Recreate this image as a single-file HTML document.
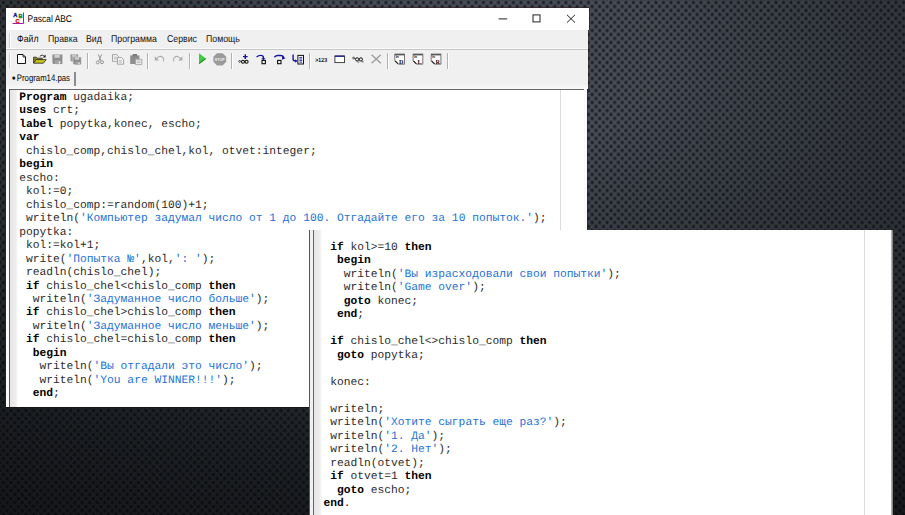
<!DOCTYPE html>
<html lang="ru">
<head>
<meta charset="utf-8">
<title>Pascal ABC</title>
<style>
html,body{margin:0;padding:0;}
body{width:905px;height:515px;overflow:hidden;position:relative;background:#16171a;font-family:"Liberation Sans",sans-serif;}
#bg{position:absolute;left:0;top:0;width:905px;height:515px;
  background:
   radial-gradient(circle at 3.75px 4px, rgba(2,4,10,.64) 0, rgba(2,4,10,.64) 0.9px, rgba(2,4,12,0) 2.3px) -0.3px -1.5px/7.5px 8px,
   radial-gradient(circle at 3.75px 4px, rgba(2,4,10,.64) 0, rgba(2,4,10,.64) 0.9px, rgba(2,4,12,0) 2.3px) 3.45px 2.5px/7.5px 8px,
   radial-gradient(ellipse 1000px 550px at 480px 60px, #484c55 0%, #474b54 18%, #41464f 23%, #393d44 33.5%, #33373c 42.5%, #2f3338 49%, #26292d 61%, #1f2225 72%, #191b1e 85%, #141517 100%);
}
.win{position:absolute;background:#fff;}
#w1{left:5.8px;top:7.7px;width:583px;height:399.3px;background:none;}
#tb{position:absolute;left:0;top:0;width:582.9px;height:22.4px;background:#fff;box-shadow:0 -1px 0 rgba(50,30,25,.6),-1px 0 0 rgba(50,30,25,.6),1px 0 0 rgba(40,25,20,.5);}
#chrome{position:absolute;left:0;top:22.4px;width:582px;height:59.1px;background:#f0f0f0;box-shadow:-1px 0 0 rgba(50,30,25,.6),1px 0 0 rgba(40,25,20,.4);}
#menu{position:absolute;left:0;top:0;width:100%;height:19.3px;border-bottom:1px solid #c6c6c6;box-shadow:inset 0 -1px 0 #fafafa;}
#menu span{position:absolute;top:4.4px;font-size:9.9px;line-height:11px;color:#111;white-space:nowrap;transform-origin:0 50%;transform:scaleX(.885);text-rendering:geometricPrecision;}
.grip{position:absolute;width:1px;background:#cdcdcd;box-shadow:1px 0 0 #fff;}
.sep{position:absolute;width:1px;top:30px;height:15.5px;background:#b2b2b2;box-shadow:1px 0 0 #fff;}
#tool{position:absolute;left:0;top:0;}
#tool svg{position:absolute;overflow:visible;}
#tab{position:absolute;left:6.6px;top:66px;font-size:9.3px;line-height:11px;color:#000;white-space:nowrap;transform-origin:0 50%;transform:scaleX(.835);text-rendering:geometricPrecision;}
#tab b{font-weight:normal;font-size:12px;line-height:0;margin-right:1.6px;position:relative;top:.6px;}
#tabsep{position:absolute;left:68.2px;top:64px;width:1.8px;height:14.4px;background:#8c8c8c;}
#edf{position:absolute;left:0;top:81.4px;width:581.2px;height:317.9px;background:#fafafa;box-shadow:-1px 0 0 rgba(50,30,25,.6),1px 0 0 rgba(40,25,20,.5),0 1px 0 rgba(20,20,20,.8);}
#ed1{position:absolute;left:3.4px;top:81.4px;width:573.6px;height:316.9px;background:#fff;border-top:1px solid #666;border-left:1px solid #555;}
.gut{position:absolute;left:0;top:0;bottom:0;width:8px;background:linear-gradient(90deg,#e6e6e6,#eee 75%,#fff);}
.ml{position:absolute;top:0;bottom:0;width:1px;background:#dcdcdc;}
pre{margin:0;position:absolute;text-rendering:geometricPrecision;font-family:"Liberation Mono",monospace;font-size:11.27px;line-height:13.5px;color:#2a2a2a;white-space:pre;}
pre b{font-weight:bold;color:#000;}
pre i{font-style:normal;color:#2272d8;}
#w2{left:308.5px;top:230px;width:584px;height:290px;box-shadow:inset -1px 0 0 #999;}
</style>
</head>
<body>
<div id="bg"></div>

<div class="win" id="w1">
  <div id="tb">
    <svg style="position:absolute;left:6px;top:4.5px" width="13" height="13" viewBox="0 0 13 13">
      <path d="M11.5 0.5V11.5H0.5" fill="none" stroke="#a020a0" stroke-width="1"/>
      <text x="1.2" y="5" font-family="Liberation Sans, sans-serif" font-size="5.6" font-weight="bold" fill="#15158c" stroke="#15158c" stroke-width=".35">A</text>
      <text x="6.6" y="6" font-family="Liberation Sans, sans-serif" font-size="5.6" font-weight="bold" fill="#128a12" stroke="#128a12" stroke-width=".35">B</text>
      <text x="3.4" y="10.6" font-family="Liberation Sans, sans-serif" font-size="5.6" font-weight="bold" fill="#e01818" stroke="#e01818" stroke-width=".35">C</text>
    </svg>
    <svg style="position:absolute;left:20px;top:4px;overflow:visible" width="60" height="16"><text x="1.6" y="10.4" text-rendering="geometricPrecision" font-family="Liberation Sans, sans-serif" font-size="9.8" fill="#000" textLength="44.3" lengthAdjust="spacingAndGlyphs">Pascal ABC</text></svg>
    <svg style="position:absolute;left:486px;top:0" width="96" height="22" viewBox="0 0 96 22">
      <path d="M6.6 10.9H15.2" stroke="#222" stroke-width="1" fill="none"/>
      <rect x="41" y="6.9" width="7" height="7" fill="none" stroke="#222" stroke-width="1"/>
      <path d="M75 6.8L83 14.6M83 6.8L75 14.6" stroke="#222" stroke-width="1" fill="none"/>
    </svg>
  </div>
  <div id="chrome">
    <div id="menu">
      <div class="grip" style="left:3.2px;top:2.5px;height:15px"></div>
      <span style="left:10.8px">Файл</span>
      <span style="left:42.2px">Правка</span>
      <span style="left:80.2px">Вид</span>
      <span style="left:105.2px">Программа</span>
      <span style="left:161.0px">Сервис</span>
      <span style="left:200.1px">Помощь</span>
    </div>
    <div style="position:absolute;left:0;right:0;top:54px;height:5.1px;background:linear-gradient(#f1f1f1,#fafafa)"></div>
    <div class="grip" style="left:3.2px;top:23px;height:15px"></div>
    <div id="tool">
<svg style="left:0;top:20px" width="460" height="22" viewBox="6 50 460 22">
  <!-- new -->
  <path d="M17.5 54.5H23L25.5 57V63.5H17.5Z" fill="#fff" stroke="#111" stroke-width="1"/>
  <path d="M23 54.5V57H25.5" fill="none" stroke="#111" stroke-width=".8"/>
  <!-- open -->
  <path d="M33.6 63V57.2H36.4L37.4 58.2H42.2V59.6" fill="#8a8420" stroke="#222" stroke-width=".8"/>
  <path d="M33.6 63.2L36.2 59.6H46.2L43.4 63.2Z" fill="#c9c31c" stroke="#222" stroke-width=".8"/>
  <path d="M39.8 56.2Q42.3 53.8 44.6 56.3" fill="none" stroke="#222" stroke-width=".9"/>
  <path d="M45.6 54.6V57.4H42.8Z" fill="#222"/>
  <!-- save -->
  <path d="M52.400 54.600H62.400V64.100H53.400L52.400 63.100Z" fill="#8e8e8e"/>
  <rect x="54.400" y="54.800" width="5.400" height="3" fill="#cfcfcf"/>
  <rect x="54.800" y="60.400" width="5.600" height="3.700" fill="#a2a2a2"/>
  <rect x="58.800" y="61.400" width="1.400" height="2" fill="#f4f4f4"/>
  <!-- save all -->
  <path d="M70.400 54.200H78.200V61.400H71.400L70.400 60.400Z" fill="#9c9c9c"/>
  <rect x="72" y="54.400" width="4.400" height="2.200" fill="#c8c8c8"/>
  <path d="M73 57H81.200V64.600H74L73 63.600Z" fill="#8a8a8a" stroke="#e6e6e6" stroke-width=".5"/>
  <rect x="74.800" y="57.300" width="4.400" height="2.400" fill="#cfcfcf"/>
  <rect x="75.200" y="61.600" width="4.400" height="3" fill="#a0a0a0"/>
  <rect x="78.400" y="62.400" width="1.200" height="1.800" fill="#f4f4f4"/>
  <!-- cut -->
  <g fill="none" stroke="#969696" stroke-width="1">
    <path d="M98.300 54.400L101 60.800M101.600 54.400L98.900 60.800"/>
    <circle cx="97.800" cy="62.400" r="1.500"/>
    <circle cx="102" cy="62.200" r="1.500"/>
  </g>
  <!-- copy -->
  <g fill="#f4f4f4" stroke="#9c9c9c" stroke-width=".9">
    <path d="M112.5 54.6H116.6L118.4 56.4V61.4H112.5Z"/>
    <path d="M117.4 57.6H121.6L123.6 59.6V64.2H117.4Z"/>
  </g>
  <path d="M113.8 57.2H116.8M113.8 58.8H116.8M118.8 60.6H122M118.8 62.2H122" stroke="#a8a8a8" stroke-width=".7"/>
  <!-- paste -->
  <path d="M130.2 55.4H139.4V64H130.2Z" fill="#8e8e8e"/>
  <path d="M132.6 54H137V56.4H132.6Z" fill="#7c7c7c"/>
  <path d="M135.4 59.2H141.8V64.6H135.4Z" fill="#efefef" stroke="#999" stroke-width=".8"/>
  <path d="M136.6 61H140.4M136.6 62.6H140.4" stroke="#aaa" stroke-width=".7"/>
  <!-- undo / redo -->
  <g fill="none" stroke="#aaa" stroke-width="1.1">
    <path d="M156.2 59.2Q159.6 54.6 163 57.6Q164.4 59.2 163.4 61.6"/>
    <path d="M181 59.2Q177.600 54.6 174.2 57.6Q172.8 59.2 173.8 61.6"/>
  </g>
  <path d="M154.8 56.2V60.4H159Z" fill="#aaa"/>
  <path d="M182.400 56.2V60.4H178.2Z" fill="#aaa"/>
  <!-- run -->
  <path d="M199 53.2L206.200 58.700L199 64.200Z" fill="#40cc40"/>
  <path d="M199 64.200L206.200 58.700L205 58.400L199.400 62.400Z" fill="#1f8a1f"/>
  <!-- stop -->
  <path d="M217 53.200H222.600L226.200 56.800V61.800L222.600 65.400H217L213.400 61.800V56.800Z" fill="#9a9a9a"/>
  <text x="219.800" y="60.700" font-family="Liberation Sans, sans-serif" font-size="4.300" font-weight="bold" fill="#f0f0f0" text-anchor="middle" textLength="10" lengthAdjust="spacingAndGlyphs">STOP</text>
  <!-- step icons -->
  <g fill="none" stroke="#1414a0" stroke-width="1.4">
    <path d="M245.300 54.300V58.900M243 56.600H247.600"/>
    <path d="M256.600 57Q258.400 55.400 260.600 55.400Q263.400 55.400 263.400 57.400V59"/>
    <path d="M274.400 57.200Q275.800 55.500 277.800 55.500H280.400Q283 55.500 283.800 57.400"/>
    <path d="M293.100 54.600V59Q293.100 61 295.600 61"/>
  </g>
  <g fill="none" stroke="#111" stroke-width="1.100">
    <circle cx="239.600" cy="61.400" r=".900" stroke-width=".7"/><circle cx="243" cy="61.800" r="1.500"/><circle cx="246.600" cy="61.800" r="1.500"/>
    <rect x="262" y="60.400" width="3.400" height="3.300"/>
    <rect x="277.600" y="60.400" width="3.400" height="3.300"/>
  </g>
  <path d="M261.200 58.200H265.600L263.400 60.200Z" fill="#1414a0"/>
  <path d="M282.200 56L285.600 58.200L282 59.800Z" fill="#1414a0"/>
  <path d="M295.200 59.200L297.600 61L295.200 62.800Z" fill="#1414a0"/>
  <rect x="297.900" y="55.400" width="5.600" height="8.600" fill="#fff" stroke="#111" stroke-width="1"/>
  <path d="M299.400 57.400H302.200M299.400 59H302.200M299.400 60.600H302.200M299.400 62.200H302.200" stroke="#1414a0" stroke-width=".9"/>
  <!-- >123 -->
  <text x="315.300" y="61.700" text-rendering="geometricPrecision" font-family="Liberation Sans, sans-serif" font-size="5.800" fill="#000" stroke="#000" stroke-width=".15" textLength="11.800" lengthAdjust="spacingAndGlyphs">&gt;123</text>
  <!-- window -->
  <rect x="334.900" y="56" width="9.600" height="6.600" fill="#fff" stroke="#333" stroke-width=".9"/>
  <rect x="334.900" y="55.600" width="9.600" height="1.200" fill="#14148c"/>
  <!-- glasses -->
  <g fill="none" stroke="#111" stroke-width="1">
    <circle cx="353.600" cy="58" r=".900" stroke-width=".7"/>
    <circle cx="357.100" cy="59.400" r="1.600"/><circle cx="360.900" cy="59.400" r="1.600"/>
  </g>
  <path d="M354.400 58.600L355.600 59M361.600 61.800H363.600M357.400 62H359.400" stroke="#333" stroke-width=".8"/>
  <!-- gray X -->
  <path d="M371.600 54.800L380.800 63.200M380.800 54.800L371.600 63.200" stroke="#9c9c9c" stroke-width="1.300" fill="none"/>
  <!-- D L R -->
  <g id="dlr">
    <path d="M394.8 55V60.6L398.3 64.2H404.5V55Z" fill="#fff" stroke="#555" stroke-width=".8"/>
    <path d="M394.5 54.3H404.9" stroke="#555" stroke-width="1.3"/>
    <path d="M395.1 60.8L398.1 63.8" stroke="#222" stroke-width="1.2"/>
    <text x="395.9" y="58.4" font-family="Liberation Serif, serif" font-size="3.8" font-weight="bold" fill="#000">iv</text>
    <text x="399.1" y="63.5" font-family="Liberation Serif, serif" font-size="6.2" font-weight="bold" fill="#111">D</text>
    <path d="M413.1 55V60.6L416.6 64.2H422.8V55Z" fill="#fff" stroke="#555" stroke-width=".8"/>
    <path d="M412.8 54.3H423.2" stroke="#555" stroke-width="1.3"/>
    <path d="M413.4 60.8L416.4 63.8" stroke="#222" stroke-width="1.2"/>
    <text x="414.2" y="58.4" font-family="Liberation Serif, serif" font-size="3.8" font-weight="bold" fill="#000">iv</text>
    <text x="417.4" y="63.5" font-family="Liberation Serif, serif" font-size="6.2" font-weight="bold" fill="#111">L</text>
    <path d="M431.2 55V60.6L434.7 64.2H440.9V55Z" fill="#fff" stroke="#555" stroke-width=".8"/>
    <path d="M430.9 54.3H441.3" stroke="#555" stroke-width="1.3"/>
    <path d="M431.5 60.8L434.5 63.8" stroke="#222" stroke-width="1.2"/>
    <text x="432.3" y="58.4" font-family="Liberation Serif, serif" font-size="3.8" font-weight="bold" fill="#000">iv</text>
    <text x="435.5" y="63.5" font-family="Liberation Serif, serif" font-size="6.2" font-weight="bold" fill="#111">R</text>
  </g>
</svg>
    </div>
    <div class="sep" style="left:81.5px;top:23px"></div>
    <div class="sep" style="left:141.5px;top:23px"></div>
    <div class="sep" style="left:183.5px;top:23px"></div>
    <div class="sep" style="left:225.5px;top:23px"></div>
    <div class="sep" style="left:303.5px;top:23px"></div>
    <div class="sep" style="left:381.5px;top:23px"></div>
    <div class="sep" style="left:441.5px;top:23px"></div>
  </div>
  <div id="tab" style="top:65.4px"><b>•</b>Program14.pas</div>
  <div id="tabsep"></div>
  <div id="edf"></div>
  <div id="ed1">
    <div class="gut"></div>
    <div class="ml" style="left:550px"></div>
<pre style="left:9px;top:1.6px;line-height:13.52px">
<b>Program</b> ugadaika;
<b>uses</b> crt;
<b>label</b> popytka,konec, escho;
<b>var</b>
 chislo_comp,chislo_chel,kol, otvet:integer;
<b>begin</b>
escho:
 kol:=0;
 chislo_comp:=random(100)+1;
 writeln(<i>'Компьютер задумал число от 1 до 100. Отгадайте его за 10 попыток.'</i>);
popytka:
</pre>
<pre style="left:9px;top:150.2px;line-height:13.43px">
 kol:=kol+1;
 write(<i>'Попытка №'</i>,kol,<i>': '</i>);
 readln(chislo_chel);
 <b>if</b> chislo_chel&lt;chislo_comp <b>then</b>
  writeln(<i>'Задуманное число больше'</i>);
 <b>if</b> chislo_chel&gt;chislo_comp <b>then</b>
  writeln(<i>'Задуманное число меньше'</i>);
 <b>if</b> chislo_chel=chislo_comp <b>then</b>
  <b>begin</b>
   writeln(<i>'Вы отгадали это число'</i>);
   writeln(<i>'You are WINNER!!!'</i>);
  <b>end</b>;
</pre>
  </div>
</div>

<div class="win" id="w2">
  <div style="position:absolute;left:1.8px;top:0;bottom:0;width:3px;background:#f0f0f0"></div>
  <div style="position:absolute;left:0.8px;top:0;bottom:0;width:1px;background:#555"></div>
  <div style="position:absolute;left:4.8px;top:0;bottom:0;width:1.2px;background:#666"></div>
  <div class="gut" style="left:5.7px;width:8px"></div>
  <div class="ml" style="left:555px"></div>
  <div style="position:absolute;right:0;top:0;bottom:0;width:1.6px;background:linear-gradient(90deg,#c8c8c8,#6e6e6e)"></div>
<pre style="left:14.9px;top:11.8px">
 <b>if</b> kol&gt;=10 <b>then</b>
  <b>begin</b>
   writeln(<i>'Вы израсходовали свои попытки'</i>);
   writeln(<i>'Game over'</i>);
   <b>goto</b> konec;
  <b>end</b>;

 <b>if</b> chislo_chel&lt;&gt;chislo_comp <b>then</b>
  <b>goto</b> popytka;

 konec:

 writeln;
 writeln(<i>'Хотите сыграть еще раз?'</i>);
 writeln(<i>'1. Да'</i>);
 writeln(<i>'2. Нет'</i>);
 readln(otvet);
 <b>if</b> otvet=1 <b>then</b>
  <b>goto</b> escho;
<b>end</b>.
</pre>
</div>
</body>
</html>
